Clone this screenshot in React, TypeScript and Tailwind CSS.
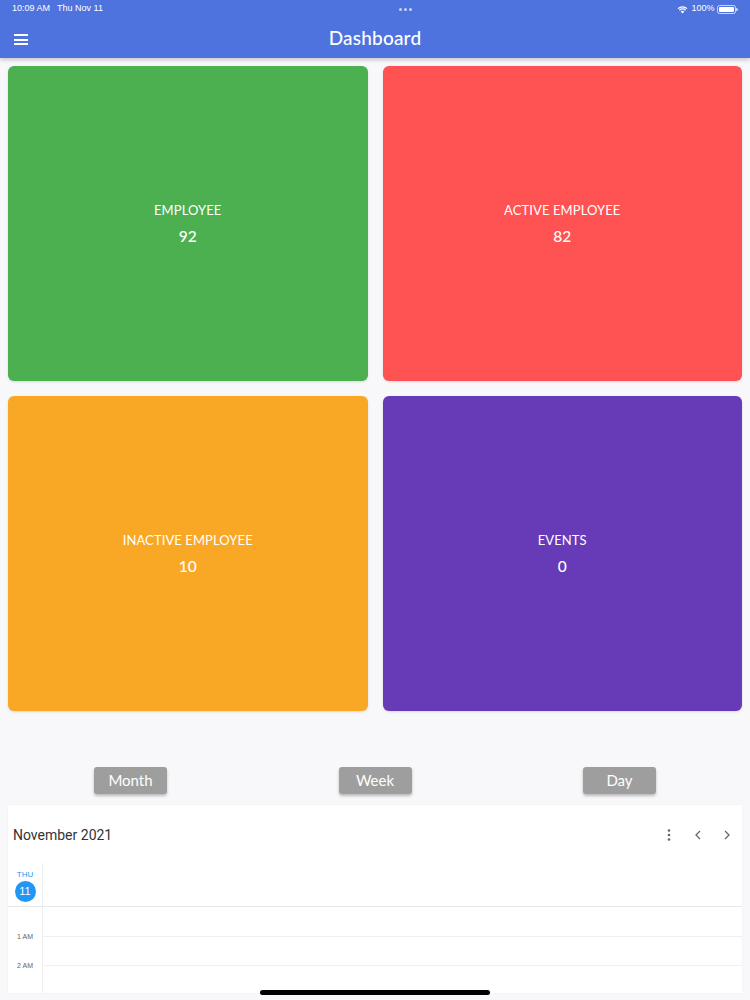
import React from "react";

const font = { fontFamily: "Lato, 'Open Sans', sans-serif" };

function Card({ bg, label, value }: { bg: string; label: string; value: string }) {
  return (
    <div className={`${bg} rounded-[6px] h-[315px] flex flex-col items-center justify-center text-white shadow-sm`}>
      <div className="text-[13px] leading-[18px] tracking-[0.1px]">{label}</div>
      <div className="text-[15.5px] leading-[20px] mt-[7px] font-medium">{value}</div>
    </div>
  );
}

function Btn({ children }: { children: React.ReactNode }) {
  return (
    <div className="w-[73px] h-[27px] bg-[#9e9e9e] rounded-[3px] text-white text-[15px] flex items-center justify-center shadow-[0_2px_3px_rgba(0,0,0,0.25)]">
      {children}
    </div>
  );
}

export default function App() {
  return (
    <div className="w-[750px] h-[1000px] bg-[#f8f8fa] relative overflow-hidden" style={font}>
      <div className="bg-[#4e73df] h-[58px] shadow-[0_2px_4px_rgba(0,0,0,0.2)] relative z-10">
        <div className="h-[18px] flex items-center justify-between px-[12px] text-white text-[9px]">
          <div className="flex gap-[7px]" style={{ fontFamily: "'Liberation Sans', sans-serif" }}>
            <span>10:09 AM</span>
            <span>Thu Nov 11</span>
          </div>
          <div className="flex gap-[2px] ml-[30px]">
            <span className="w-[3px] h-[3px] rounded-full bg-white/70" />
            <span className="w-[3px] h-[3px] rounded-full bg-white/70" />
            <span className="w-[3px] h-[3px] rounded-full bg-white/70" />
          </div>
          <div className="flex items-center gap-[3px]" style={{ fontFamily: "'Liberation Sans', sans-serif" }}>
            <svg width="11" height="9" viewBox="0 0 12 10">
              <path d="M6 9.5 L8 7.2 A3 3 0 0 0 4 7.2 Z" fill="white" />
              <path d="M2.6 5.8 A4.8 4.8 0 0 1 9.4 5.8" stroke="white" strokeWidth="1.4" fill="none" />
              <path d="M1 4 A7.2 7.2 0 0 1 11 4" stroke="white" strokeWidth="1.4" fill="none" />
            </svg>
            <span>100%</span>
            <div className="flex items-center">
              <div className="w-[19px] h-[9px] rounded-[2.5px] border border-white/70 p-[1px]">
                <div className="w-full h-full bg-white rounded-[1px]" />
              </div>
              <div className="w-[1.5px] h-[3px] bg-white/70 rounded-r" />
            </div>
          </div>
        </div>
        <div className="h-[40px] flex items-center relative">
          <div className="absolute left-[14px] top-[16px] flex flex-col gap-[2.5px]">
            <span className="w-[14px] h-[2px] bg-white" />
            <span className="w-[14px] h-[2px] bg-white" />
            <span className="w-[14px] h-[2px] bg-white" />
          </div>
          <div className="w-full text-center text-white text-[19px] leading-[24px] font-medium tracking-[0.2px]">Dashboard</div>
        </div>
      </div>

      <div className="grid grid-cols-2 gap-x-[15px] gap-y-[15px] px-[8px] pt-[8px]">
        <Card bg="bg-[#4caf50]" label="EMPLOYEE" value="92" />
        <Card bg="bg-[#ff5252]" label="ACTIVE EMPLOYEE" value="82" />
        <Card bg="bg-[#f9a825]" label="INACTIVE EMPLOYEE" value="10" />
        <Card bg="bg-[#673ab7]" label="EVENTS" value="0" />
      </div>

      <div className="flex justify-between pl-[94px] pr-[94px] mt-[56px]">
        <Btn>Month</Btn>
        <Btn>Week</Btn>
        <Btn>Day</Btn>
      </div>

      <div className="mx-[8px] mt-[11px] bg-white h-[188px] shadow-[0_0_2px_rgba(0,0,0,0.05)]">
        <div className="h-[58px] flex items-center justify-between pl-[5px] pr-[7px] pt-[2px]">
          <div className="text-[14px] text-[#333]" style={{ fontFamily: "Roboto, sans-serif" }}>November 2021</div>
          <div className="flex items-center gap-[13px] text-[#666]">
            <svg width="16" height="16" viewBox="0 0 16 16">
              <circle cx="8" cy="3.5" r="1.3" fill="#666" />
              <circle cx="8" cy="8" r="1.3" fill="#666" />
              <circle cx="8" cy="12.5" r="1.3" fill="#666" />
            </svg>
            <svg width="16" height="16" viewBox="0 0 16 16">
              <path d="M10 4 L6 8 L10 12" stroke="#666" strokeWidth="1.3" fill="none" />
            </svg>
            <svg width="16" height="16" viewBox="0 0 16 16">
              <path d="M6 4 L10 8 L6 12" stroke="#666" strokeWidth="1.3" fill="none" />
            </svg>
          </div>
        </div>
        <div className="flex h-[130px]" style={{ fontFamily: "'Liberation Sans', sans-serif" }}>
          <div className="w-[35px] border-r border-[#eeeeee] flex flex-col">
            <div className="h-[44px] flex flex-col items-center pt-[7px] border-b border-[#e8e8e8]">
              <div className="text-[8px] leading-[10px] text-[#2196f3]">THU</div>
              <div className="w-[21px] h-[21px] rounded-full bg-[#2196f3] text-white text-[11px] flex items-center justify-center mt-[1px]">11</div>
            </div>
            <div className="h-[30px] flex items-end justify-center text-[7px] text-[#666] leading-[8px]">
              <span className="translate-y-[4px]">1 AM</span>
            </div>
            <div className="h-[29px] flex items-end justify-center text-[7px] text-[#666] leading-[8px]">
              <span className="translate-y-[4px]">2 AM</span>
            </div>
          </div>
          <div className="flex-1 flex flex-col">
            <div className="h-[44px] border-b border-[#e8e8e8]" />
            <div className="h-[30px] border-b border-[#f0f0f0]" />
            <div className="h-[29px] border-b border-[#f0f0f0]" />
          </div>
        </div>
      </div>

      <div className="absolute left-[260px] bottom-[5px] w-[230px] h-[5px] rounded-full bg-black" />
    </div>
  );
}
